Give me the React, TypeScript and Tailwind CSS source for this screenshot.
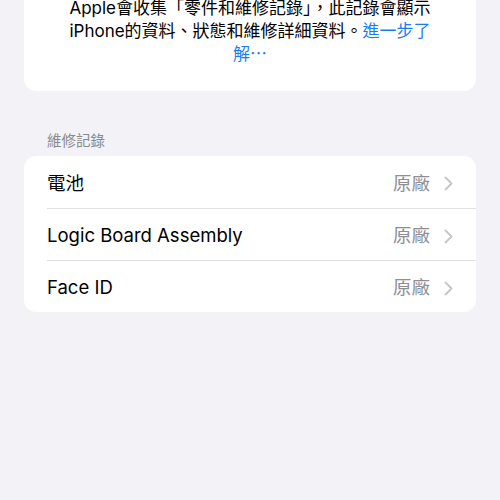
const FONT = "font-['Inter','Noto_Sans_CJK_TC',sans-serif]";

const rows = [
  { label: "電池", value: "原廠" },
  { label: "Logic Board Assembly", value: "原廠" },
  { label: "Face ID", value: "原廠" },
];

function Chevron() {
  return (
    <svg width="9" height="15" viewBox="0 0 9 15" className="ml-[14px]">
      <path d="M1.5 1.5 L7.5 7.5 L1.5 13.5" fill="none" stroke="#c7c7cc" strokeWidth="2" strokeLinecap="round" strokeLinejoin="round" />
    </svg>
  );
}

export default function App() {
  return (
    <div className={`w-[500px] h-[500px] overflow-hidden bg-[#f2f2f7] ${FONT}`}>
      <div className="mx-[24px] -mt-[20px] pt-[17px] pb-[25px] bg-white rounded-[12px] text-center text-[17px] leading-[23px] text-black">
        Apple會收集「零件和維修記錄」，此記錄會顯示
        <br />
        iPhone的資料、狀態和維修詳細資料。<span className="text-[#1a7cf5]">進一步了</span>
        <br />
        <span className="text-[#1a7cf5]">解⋯</span>
      </div>

      <div className="mt-[40px] ml-[47px] text-[14.5px] leading-[20px] text-[#8a8a8e]">維修記錄</div>

      <div className="mx-[24px] mt-[5px] bg-white rounded-[12px]">
        {rows.map((r, i) => (
          <div key={r.label} className="pl-[23px]">
            <div
              className={`h-[52px] pt-[3px] flex items-center pr-[23px] ${
                i > 0 ? "border-t border-[#e2e2e4]" : ""
              }`}
            >
              <span className="flex-1 text-[18.5px] text-black">{r.label}</span>
              <span className="text-[18.5px] text-[#8e8e93]">{r.value}</span>
              <Chevron />
            </div>
          </div>
        ))}
      </div>
    </div>
  );
}
